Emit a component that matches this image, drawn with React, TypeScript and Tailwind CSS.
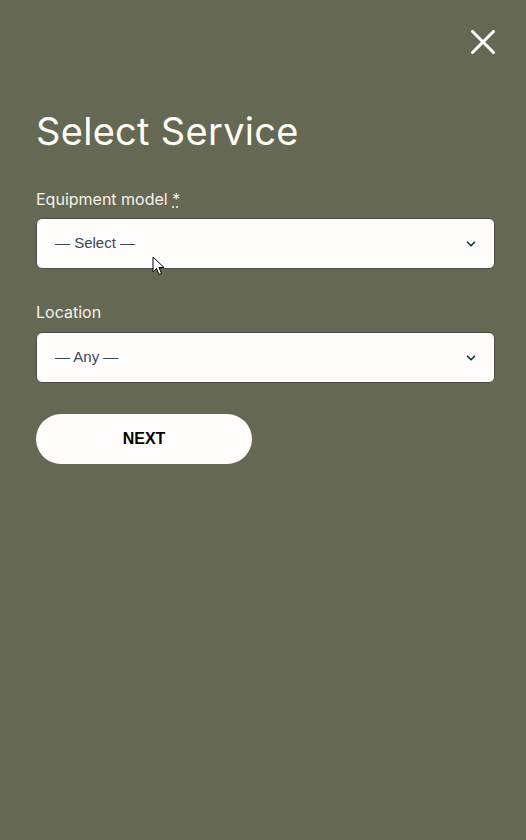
import { ChevronDown } from 'lucide-react';

function Cursor() {
  return (
    <svg width="14" height="20" viewBox="0 0 14 20" className="absolute left-[152px] top-[256px] pointer-events-none">
      <path d="M1 1 L1 16 L4.5 12.5 L7 18.5 L9.5 17.5 L7 11.5 L12 11.5 Z" fill="#fff" stroke="#000" strokeWidth="1" strokeLinejoin="round" />
    </svg>
  );
}

function SelectBox({ value }: { value: string }) {
  return (
    <div className="flex items-center justify-between h-[51px] bg-[#fffdfb] border border-[#4a4d45] rounded-[6px] pl-[18px] pr-[16px]">
      <span className="text-[15px] text-[#3a4755] font-['Liberation_Sans',Arial,sans-serif]">{value}</span>
      <ChevronDown className="w-[14px] h-[14px] text-[#123a40]" strokeWidth={3} />
    </div>
  );
}

export default function App() {
  return (
    <div className="relative w-[526px] h-[840px] bg-[#656852] font-['Inter',sans-serif] overflow-hidden">
      <div className="flex justify-end pt-[30px] pr-[31px]">
        <button className="text-white">
          <svg width="24" height="24" viewBox="0 0 24 24">
            <path d="M1.5 1.5 L22.5 22.5 M22.5 1.5 L1.5 22.5" stroke="#fff" strokeWidth="3" strokeLinecap="square" />
          </svg>
        </button>
      </div>

      <div className="pl-[36px] pr-[31px]">
        <h1 className="mt-[58px] text-[38px] leading-none text-[#fffdf8] tracking-[0.3px]">Select Service</h1>

        <div className="mt-[37px]">
          <label className="block text-[16px] leading-[24px] text-[#f5f2ea] mb-[7px]">
            Equipment model{' '}
            <span className="underline decoration-dotted underline-offset-2">*</span>
          </label>
          <SelectBox value="— Select —" />
        </div>

        <div className="mt-[31px]">
          <label className="block text-[16px] leading-[24px] text-[#f5f2ea] mb-[8px]">Location</label>
          <SelectBox value="— Any —" />
        </div>

        <button className="mt-[31px] w-[216px] h-[50px] rounded-full bg-[#fffdfb] text-[16px] font-bold text-black font-['Liberation_Sans',Arial,sans-serif]">
          NEXT
        </button>
      </div>

      <Cursor />
    </div>
  );
}
